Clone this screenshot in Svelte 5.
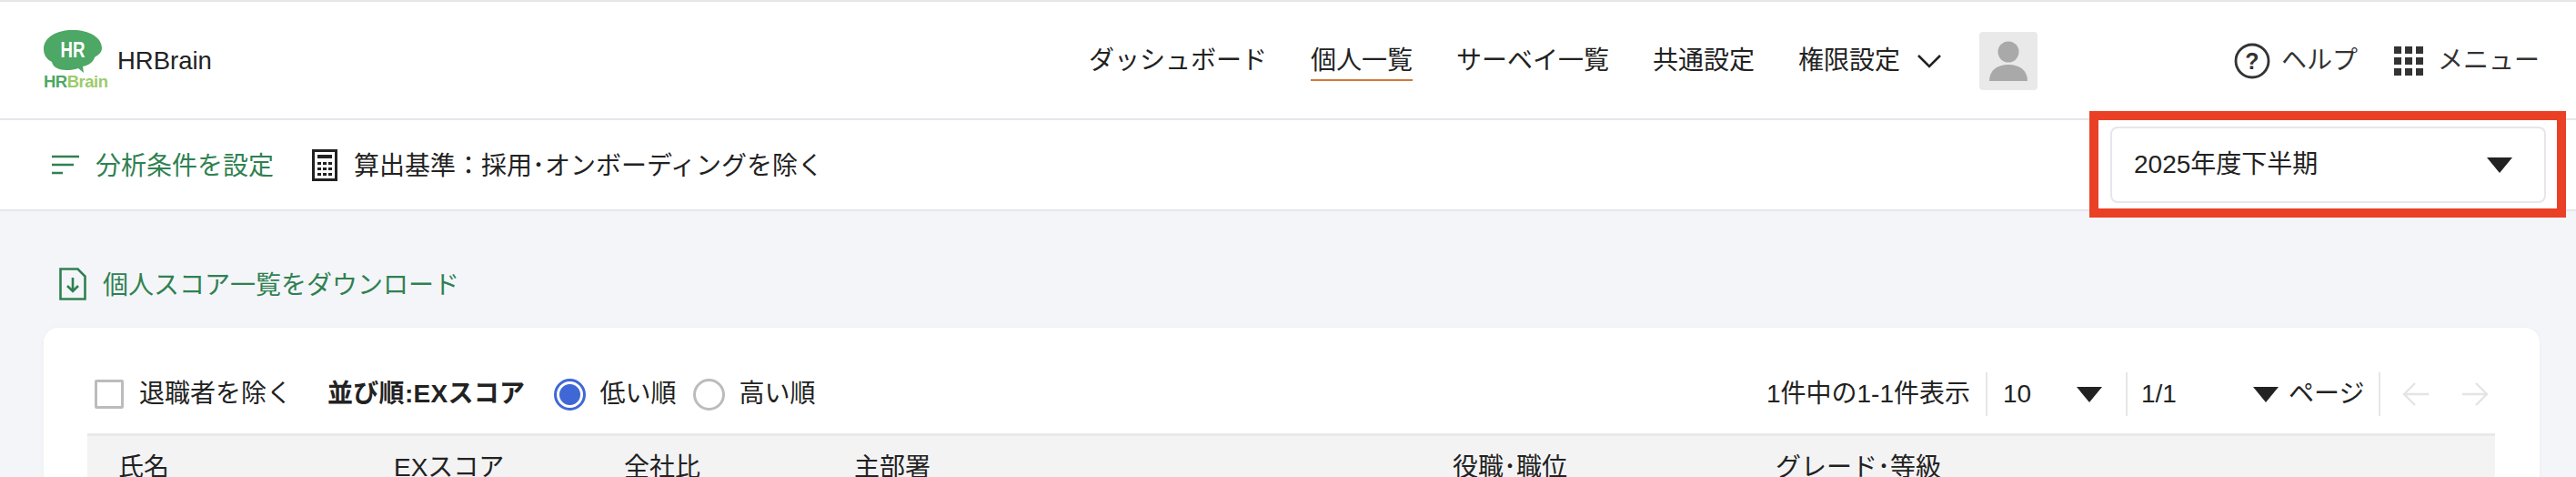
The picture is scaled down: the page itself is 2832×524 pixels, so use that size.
<script>
  const navItems = [
    { label: 'ダッシュボード' },
    { label: '個人一覧', active: true },
    { label: 'サーベイ一覧' },
    { label: '共通設定' }
  ];
  const columns = ['氏名', 'EXスコア', '全社比', '主部署', '役職･職位', 'グレード･等級'];
</script>

<div class="page">
  <header class="topbar">
    <div class="brand">
      <div class="logo">
        <svg viewBox="0 0 64 48" width="64" height="48">
          <path d="M32 0C14 0 0 8 0 21c0 6 3 11 9 14 1 6 8 9 16 9 5 0 9-.5 13-2l6 5-1-7c6-1 12-5 13-10 5-3 8-6 8-10C64 8 50 0 32 0z" fill="#4da765" />
          <text x="32" y="30" text-anchor="middle" textLength="27" lengthAdjust="spacingAndGlyphs" class="logo-hr">HR</text>
        </svg>
        <span class="logo-name"><b>HR</b><em>Brain</em></span>
      </div>
      <span class="brand-name">HRBrain</span>
    </div>

    <nav class="nav">
      {#each navItems as item}
        <span class="nav-item" class:active={item.active}>{item.label}</span>
      {/each}
      <span class="nav-item with-chevron">
        権限設定
        <svg viewBox="0 0 28 16" width="28" height="16"><path d="M2 2l12 12L26 2" fill="none" stroke="#222" stroke-width="2.600" /></svg>
      </span>
      <div class="avatar">
        <svg viewBox="0 0 64 64" width="64" height="64">
          <circle cx="32" cy="22" r="11.500" fill="#a9a9a9" />
          <path d="M11 54c0-12 9-18 21-18s21 6 21 18z" fill="#a9a9a9" />
        </svg>
      </div>
    </nav>

    <div class="tools">
      <span class="tool help">
        <svg viewBox="0 0 40 40" width="40" height="40">
          <circle cx="20" cy="20" r="18" fill="none" stroke="#333" stroke-width="2.800" />
          <text x="20" y="28.500" text-anchor="middle" class="help-mark">?</text>
        </svg>
        ヘルプ
      </span>
      <span class="tool">
        <span class="dots">
          {#each Array(9) as _}<i></i>{/each}
        </span>
        メニュー
      </span>
    </div>
  </header>

  <section class="filterbar">
    <span class="filter-link">
      <svg viewBox="0 0 30 22" width="30" height="22">
        <path d="M0 2h30M0 11h24M0 20h12" stroke="#2f8150" stroke-width="2.600" fill="none" />
      </svg>
      <span class="label">分析条件を設定</span>
    </span>
    <span class="basis">
      <svg viewBox="0 0 28 35" width="28" height="35">
        <rect x="1.500" y="1.500" width="25" height="32" fill="#fff" stroke="#222" stroke-width="3" />
        <rect x="6" y="6" width="16" height="4" fill="#222" />
        <path d="M6 14h4v3H6zM12 14h4v3h-4zM18 14h4v3h-4zM6 20h4v3H6zM12 20h4v3h-4zM18 20h4v3h-4zM6 26h4v3H6zM12 26h4v3h-4zM18 26h4v3h-4z" fill="#222" />
      </svg>
      <span class="label">算出基準：採用･オンボーディングを除く</span>
    </span>
    <div class="period">
      <span>2025年度下半期</span>
      <span class="caret big"></span>
    </div>
  </section>

  <main class="content">
    <div class="download">
      <svg viewBox="0 0 30 36" width="30" height="36">
        <path d="M1.500 1.500h19l8 8v25h-27z" fill="none" stroke="#2f8150" stroke-width="2.600" />
        <path d="M15 11v15M9 20l6 6 6-6" fill="none" stroke="#2f8150" stroke-width="2.600" />
      </svg>
      <span class="label">個人スコア一覧をダウンロード</span>
    </div>

    <div class="card">
      <div class="toolbar">
        <span class="checkbox"></span>
        <span class="check-label">退職者を除く</span>
        <strong class="sort-title">並び順:EXスコア</strong>
        <span class="radio on"></span>
        <span class="radio-label">低い順</span>
        <span class="radio"></span>
        <span class="radio-label">高い順</span>

        <div class="pager">
          <span class="count">1件中の1-1件表示</span>
          <span class="cell per-page">10<span class="caret"></span></span>
          <span class="cell page-no">1/1<span class="caret"></span><span class="page-word">ページ</span></span>
          <span class="cell arrows">
            <svg viewBox="0 0 30 28" width="30" height="28"><path d="M29 14H2M14 2L2 14l12 12" fill="none" stroke="#e4e4e6" stroke-width="2.400" /></svg>
            <svg viewBox="0 0 30 28" width="30" height="28"><path d="M1 14h27M16 2l12 12-12 12" fill="none" stroke="#e4e4e6" stroke-width="2.400" /></svg>
          </span>
        </div>
      </div>

      <div class="table-head">
        {#each columns as col}
          <span>{col}</span>
        {/each}
      </div>
    </div>
  </main>

  <div class="highlight"></div>
</div>

<style>
  :global(body) {
    margin: 0;
    background: #f4f5f9;
  }

  .page {
    position: relative;
    height: 524px;
    overflow: hidden;
    font-family: "Liberation Sans", "Noto Sans CJK JP", sans-serif;
    font-size: 28px;
    line-height: 40px;
    color: #222;
    background: #f4f5f9;
  }

  .topbar {
    display: flex;
    align-items: center;
    box-sizing: border-box;
    height: 132px;
    padding: 2px 0 0 48px;
    background: #fff;
    border-top: 2px solid #e8e4e7;
    border-bottom: 2px solid #e6e6ec;
  }

  .brand {
    display: flex;
    flex: none;
    align-items: center;
    gap: 17px;
    width: 1149px;
  }

  .logo {
    display: flex;
    flex-direction: column;
    width: 64px;
    margin-top: -3px;
  }

  .logo svg {
    display: block;
  }

  .logo-hr {
    font-family: "Liberation Sans", sans-serif;
    font-weight: 700;
    font-size: 24px;
    fill: #fff;
  }

  .logo-name {
    height: 17px;
    font-size: 18.500px;
    line-height: 17px;
    font-weight: 700;
    letter-spacing: -0.500px;
    white-space: nowrap;
  }

  .logo-name b {
    color: #4da765;
  }

  .logo-name em {
    font-style: normal;
    color: #9ccb6b;
  }

  .brand-name {
    font-size: 27.500px;
  }

  .nav {
    display: flex;
    flex: none;
    align-items: center;
    gap: 48px;
    width: 1259px;
  }

  .nav-item {
    position: relative;
    white-space: nowrap;
  }

  .nav-item.active::after {
    content: '';
    position: absolute;
    left: 0;
    right: 0;
    bottom: -2px;
    height: 2px;
    background: #d2783a;
  }

  .with-chevron {
    display: flex;
    align-items: center;
    gap: 18px;
  }

  .avatar {
    width: 64px;
    height: 64px;
    margin-left: -7px;
    background: #e9e9ea;
    border-radius: 4px;
  }

  .avatar svg {
    display: block;
  }

  .tools {
    display: flex;
    align-items: center;
    gap: 40px;
  }

  .tool {
    display: flex;
    align-items: center;
    gap: 15px;
    white-space: nowrap;
    color: #333;
  }

  .tool.help {
    gap: 12px;
  }

  .help-mark {
    font-family: "Liberation Sans", sans-serif;
    font-weight: 700;
    font-size: 25px;
    fill: #333;
  }

  .dots {
    display: grid;
    grid-template-columns: repeat(3, 8px);
    grid-auto-rows: 8px;
    gap: 4px;
    margin-right: 1px;
  }

  .dots i {
    background: #333;
  }

  .filterbar {
    display: flex;
    align-items: center;
    box-sizing: border-box;
    height: 100px;
    padding: 0 33px 0 57px;
    background: #fff;
    border-bottom: 2px solid #e6e6ec;
  }

  .label {
    padding-top: 3px;
  }

  .filter-link {
    display: flex;
    align-items: center;
    gap: 18px;
    color: #2f8150;
  }

  .basis {
    display: flex;
    align-items: center;
    gap: 18px;
    margin-left: 42px;
  }

  .period {
    display: flex;
    align-items: center;
    justify-content: space-between;
    box-sizing: border-box;
    width: 479px;
    height: 84px;
    margin-left: auto;
    padding: 0 35px 0 24px;
    background: #fff;
    border: 2px solid #e6e6ec;
    border-radius: 8px;
  }

  .caret {
    display: inline-block;
    width: 0;
    height: 0;
    border-left: 14px solid transparent;
    border-right: 14px solid transparent;
    border-top: 17px solid #222;
  }

  .content {
    padding: 62px 40px 0 48px;
  }

  .download {
    display: flex;
    align-items: center;
    gap: 18px;
    height: 36px;
    margin-left: 17px;
    color: #2f8150;
  }

  .card {
    margin-top: 30px;
    padding: 0 49px 0 48px;
    background: #fff;
    border-radius: 16px 16px 0 0;
    box-shadow: 0 0 4px rgba(0, 0, 0, 0.04);
  }

  .toolbar {
    display: flex;
    align-items: center;
    height: 116px;
    padding-top: 30px;
    box-sizing: border-box;
  }

  .checkbox {
    box-sizing: border-box;
    width: 32px;
    height: 32px;
    margin-left: 8px;
    border: 3px solid #bcbcbe;
    border-radius: 2px;
  }

  .check-label {
    margin-left: 17px;
  }

  .sort-title {
    margin-left: 39px;
    font-weight: 700;
    white-space: nowrap;
    letter-spacing: 0.300px;
  }

  .radio {
    box-sizing: border-box;
    width: 35px;
    height: 35px;
    margin-left: 32px;
    border: 3px solid #bcbcbe;
    border-radius: 50%;
  }

  .radio.on {
    border-color: #3f68d6;
    background: radial-gradient(circle, #3f68d6 0 11px, #fff 12px);
  }

  .radio-label {
    margin-left: 15px;
    margin-right: -13px;
  }

  .pager {
    display: flex;
    align-items: center;
    margin-left: auto;
    white-space: nowrap;
  }

  .cell {
    display: flex;
    align-items: center;
    box-sizing: border-box;
    height: 48px;
    border-left: 2px solid #e6e6e8;
  }

  .count {
    margin-right: 17px;
  }

  .per-page {
    width: 154px;
    padding-left: 17px;
  }

  .per-page .caret {
    margin-left: 50px;
  }

  .page-no {
    width: 278px;
    padding-left: 15px;
  }

  .page-no .caret {
    margin-left: 84px;
  }

  .page-word {
    margin-left: 11px;
  }

  .arrows {
    gap: 35px;
    width: 128px;
    padding-left: 24px;
  }

  .table-head {
    display: grid;
    grid-template-columns: 303px 253px 253px 658px 355px 1fr;
    box-sizing: border-box;
    height: 72px;
    padding: 15px 0 0 34px;
    background: #f3f3f4;
    border-top: 3px solid #e8e8e9;
  }

  .table-head span {
    white-space: nowrap;
  }

  .highlight {
    position: absolute;
    left: 2297px;
    top: 122px;
    box-sizing: border-box;
    width: 524px;
    height: 117px;
    border: 10px solid #ea4026;
  }
</style>
